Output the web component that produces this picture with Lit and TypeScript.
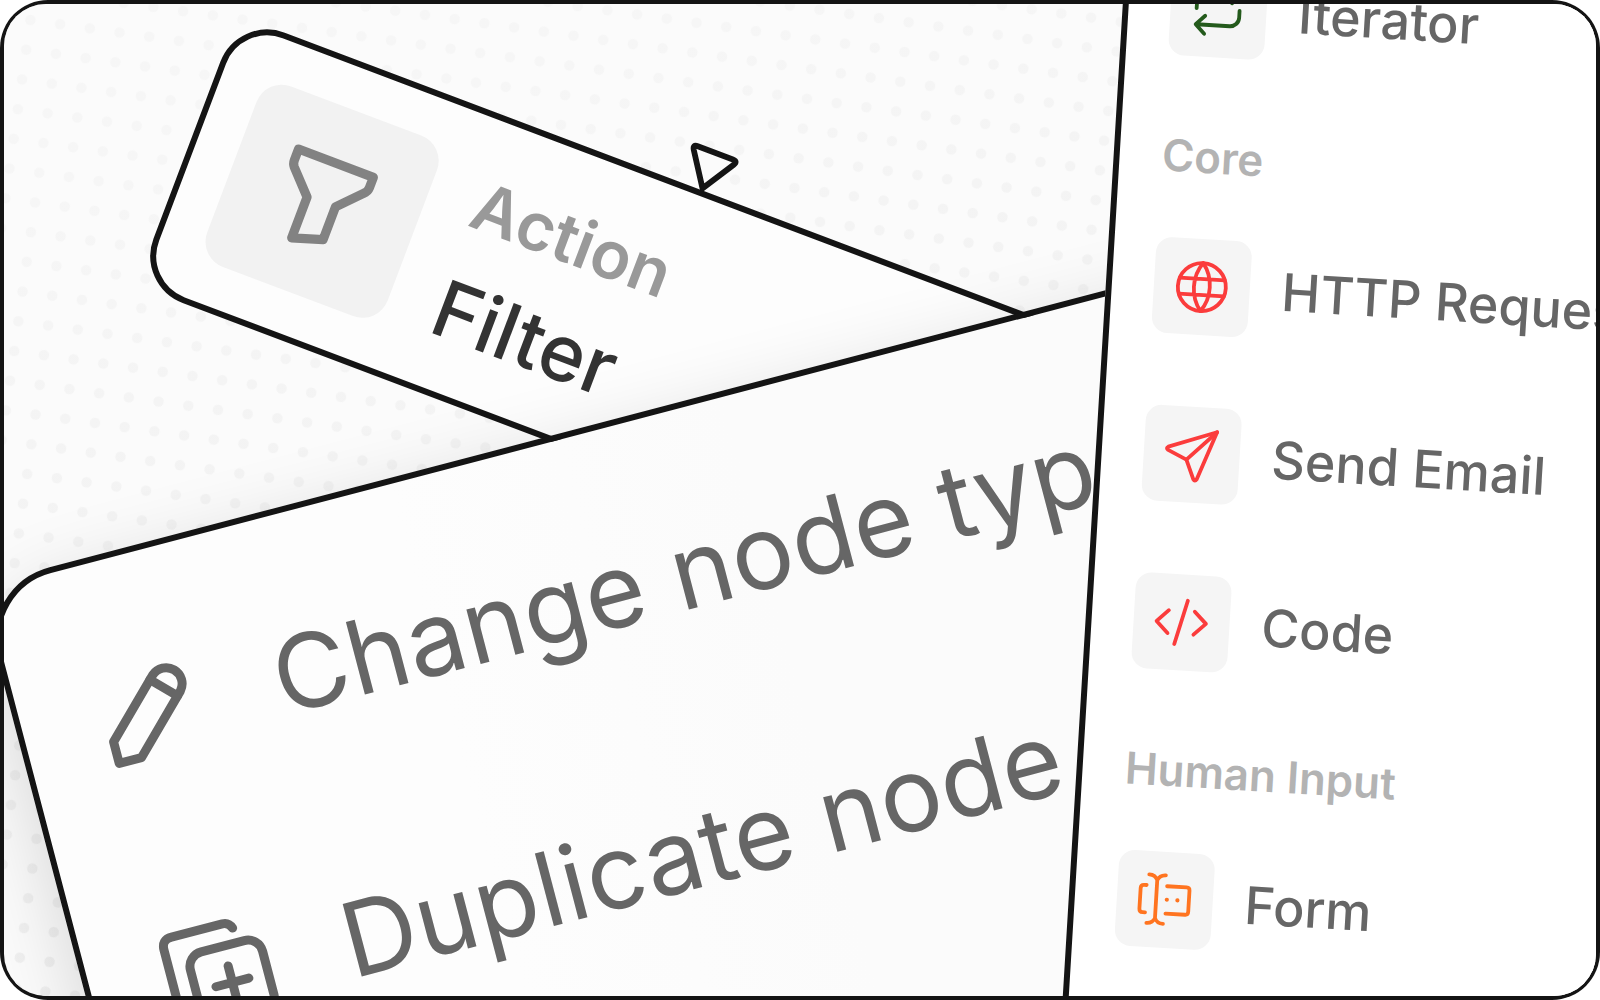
import { LitElement, html, css, svg, type TemplateResult } from "lit";
import { customElement } from "lit/decorators.js";

interface PaletteItem {
  label: string;
  tone: string;
  icon: TemplateResult;
}

interface PaletteSection {
  title?: string;
  items: PaletteItem[];
}

const repeatIcon = svg`
  <path d="M61 23l9 9-9 9M26 48v-7a9 9 0 0 1 9-9h34" />
  <path d="M35 73l-9-9 9-9M27 64h33a9 9 0 0 0 9-9v-7" />`;

const globeIcon = svg`
  <circle cx="48" cy="48" r="24" />
  <path d="M25.5 40h45M25.5 56h45M48 24c-10.6 14-10.6 34 0 48M48 24c10.6 14 10.6 34 0 48" />`;

const sendIcon = svg`
  <path d="M72 24L54.4 72.4q-1.6 2.6-3.3 0L43 53.2 24.2 44.6q-2.6-1.7 0-3.3z" />
  <path d="M72 24L43 53.2" />`;

const codeIcon = svg`
  <path d="M34.6 36.5L23 48l11.6 11.5M60.6 36.5L72.4 48 60.6 59.5M53 26L42 70" />`;

const formIcon = svg`
  <path d="M31 23.4q6.2 0 8.3 5.4 2.1-5.4 8.3-5.4M31 72q6.2 0 8.3-5.4 2.1 5.4 8.3 5.4M39.3 28.8v37.8" />
  <path d="M29 34.2h-2.4q-3.4 0-3.4 3.4v20.6q0 3.4 3.4 3.4H29M49.5 34.2h19.6q3 0 3 3v21.4q0 3-3 3H49.5" />
  <path d="M50 47.7h.01M60.6 47.7h.01" stroke-width="4.2" />`;

const sections: PaletteSection[] = [
  { items: [{ label: "Iterator", tone: "green", icon: repeatIcon }] },
  {
    title: "Core",
    items: [
      { label: "HTTP Request", tone: "red", icon: globeIcon },
      { label: "Send Email", tone: "red", icon: sendIcon },
      { label: "Code", tone: "red", icon: codeIcon },
    ],
  },
  { title: "Human Input", items: [{ label: "Form", tone: "orange", icon: formIcon }] },
];

@customElement("filter-node")
export class FilterNode extends LitElement {
  static styles = css`
    :host {
      display: flex;
      align-items: center;
      gap: 47.5px;
      box-sizing: border-box;
      width: 992px;
      height: 288.5px;
      padding: 0 42px;
      border: 6px solid #141414;
      border-radius: 50px;
      background: #fdfdfd;
    }
    .tile {
      flex: none;
      width: 192.5px;
      height: 192.5px;
      border-radius: 27px;
      background: #f2f2f2;
    }
    .tile svg {
      display: block;
      fill: none;
      stroke: #828282;
      stroke-width: 9.2;
      stroke-linejoin: round;
    }
    .labels {
      display: flex;
      flex-direction: column;
      gap: 17px;
      white-space: nowrap;
    }
    .kind {
      font-size: 66.4px;
      line-height: 96px;
      font-weight: 600;
      color: #999;
    }
    .name {
      font-size: 78.6px;
      line-height: 88px;
      font-weight: 500;
      color: #333;
    }
    .port {
      position: absolute;
      left: 463px;
      top: -52px;
      fill: #fbfbfb;
      stroke: #141414;
      stroke-width: 5.8;
      stroke-linejoin: round;
      overflow: visible;
    }
  `;

  render() {
    return html`
      <div class="tile">
        <svg width="192" height="192" viewBox="0 0 192 192">
          <path d="M56 56H136V67q0 4.5-3.5 7.5L111 97V132L81 141.5V98L58.5 74.5Q56 71.5 56 68z" />
        </svg>
      </div>
      <div class="labels">
        <div class="kind">Action</div>
        <div class="name">Filter</div>
      </div>
      <svg class="port" width="52" height="46" viewBox="0 0 52 46">
        <path d="M7.5 6.2H45Q50.500 6.2 47.5 11L26.8 44 5 11Q2 6.2 7.5 6.2z" />
      </svg>
    `;
  }
}

@customElement("node-menu")
export class NodeMenu extends LitElement {
  static styles = css`
    :host {
      display: flex;
      flex-direction: column;
      gap: 152px;
      box-sizing: border-box;
      width: 1400px;
      height: 900px;
      padding: 100px 69.5px;
      border: 6px solid #141414;
      border-radius: 74px;
      background: linear-gradient(90deg, #fdfdfd 30%, #fbfbfb 55%);
      box-shadow: 0 26px 80px rgba(0, 0, 0, 0.16);
    }
    .row {
      display: flex;
      align-items: center;
      gap: 67.5px;
      height: 120px;
      font-size: 103px;
      line-height: 120px;
      letter-spacing: 0.53px;
      white-space: nowrap;
      color: #666;
    }
    svg {
      flex: none;
      fill: none;
      stroke: #666;
      stroke-width: 9;
      stroke-linecap: round;
      stroke-linejoin: round;
    }
  `;

  render() {
    return html`
      <div class="row">
        <svg width="120" height="120" viewBox="0 0 120 120">
          <path d="M15.6 101.5V79.2L70.4 24.4a16 16 0 0 1 22.6 22.6L38.5 101.5z" />
          <path d="M66.5 28.2L89.2 50.9" />
        </svg>
        <span>Change node type</span>
      </div>
      <div class="row">
        <svg width="120" height="120" viewBox="0 0 120 120">
          <rect x="32" y="32.500" width="74.600" height="74.600" rx="15" />
          <path d="M83.5 17.500Q81 10.800 74.500 10.800H22Q11.500 10.800 11.500 21.500V75Q11.500 82 17 84.500" />
          <path d="M52.5 70H86.500M69.500 53V87" />
        </svg>
        <span>Duplicate node</span>
      </div>
    `;
  }
}

@customElement("node-palette")
export class NodePalette extends LitElement {
  static styles = css`
    :host {
      display: block;
      box-sizing: border-box;
      width: 640px;
      height: 1500px;
      padding: 82px 42.4px;
      border: 6px solid #141414;
      background: #fff;
    }
    .title {
      box-sizing: border-box;
      height: 60px;
      margin: 70px 0 52px;
      padding-top: 1px;
      font-size: 43.9px;
      line-height: 59px;
      font-weight: 600;
      white-space: nowrap;
      color: #b3b3b3;
    }
    .items {
      display: flex;
      flex-direction: column;
      gap: 72px;
    }
    .item {
      display: flex;
      align-items: flex-start;
      gap: 31.6px;
      height: 96px;
      font-size: 52px;
      font-weight: 500;
      line-height: 98px;
      white-space: nowrap;
      color: #666;
    }
    .tile {
      flex: none;
      width: 96px;
      height: 96px;
      border-radius: 16px;
      background: #f5f5f5;
    }
    .tile svg {
      display: block;
      fill: none;
      stroke: currentColor;
      stroke-width: 3.8;
      stroke-linecap: round;
      stroke-linejoin: round;
    }
    .green {
      color: #245a1c;
    }
    .red {
      color: #fb3c3c;
    }
    .orange {
      color: #ff7420;
    }
  `;

  render() {
    return sections.map(
      (section) => html`
        ${section.title ? html`<div class="title">${section.title}</div>` : null}
        <div class="items">
          ${section.items.map(
            (item) => html`
              <div class="item">
                <div class="tile ${item.tone}">
                  <svg width="96" height="96" viewBox="0 0 96 96">${item.icon}</svg>
                </div>
                <span>${item.label}</span>
              </div>
            `
          )}
        </div>
      `
    );
  }
}

@customElement("app-root")
export class AppRoot extends LitElement {
  static styles = css`
    :host {
      display: block;
      box-sizing: border-box;
      width: 1600px;
      height: 1000px;
      padding: 4px;
      border-radius: 48px;
      background: #141414;
      overflow: hidden;
      font-family: Inter, "Liberation Sans", sans-serif;
    }
    .canvas {
      position: relative;
      height: 992px;
      border-radius: 42px;
      background: #fbfbfb;
      overflow: hidden;
    }
    .grid {
      display: block;
      width: 100%;
      height: 100%;
    }
    filter-node,
    node-menu,
    node-palette {
      position: absolute;
      transform-origin: 0 0;
    }
    filter-node {
      left: 234.2px;
      top: 10.9px;
      transform: rotate(20.7deg);
    }
    node-menu {
      left: -26.3px;
      top: 581.7px;
      transform: rotate(-14.7deg);
    }
    node-palette {
      left: 1127.1px;
      top: -136px;
      transform: rotate(3.46deg);
    }
  `;

  render() {
    return html`
      <div class="canvas">
        <svg class="grid">
          <defs>
            <pattern
              id="dots"
              width="30"
              height="30"
              patternUnits="userSpaceOnUse"
              patternTransform="translate(26.4 16) rotate(8) translate(-15 -15)"
            >
              <circle cx="15" cy="15" r="5.3" fill="#eeeeee" />
            </pattern>
            <linearGradient id="fade" x1="0" y1="0.2" x2="0.35" y2="1">
              <stop offset="0" stop-color="#fbfbfb" stop-opacity="0.62" />
              <stop offset="1" stop-color="#fbfbfb" stop-opacity="0" />
            </linearGradient>
          </defs>
          <rect width="100%" height="100%" fill="url(#dots)" />
          <rect width="100%" height="100%" fill="url(#fade)" />
        </svg>
        <filter-node></filter-node>
        <node-menu></node-menu>
        <node-palette></node-palette>
      </div>
    `;
  }
}
